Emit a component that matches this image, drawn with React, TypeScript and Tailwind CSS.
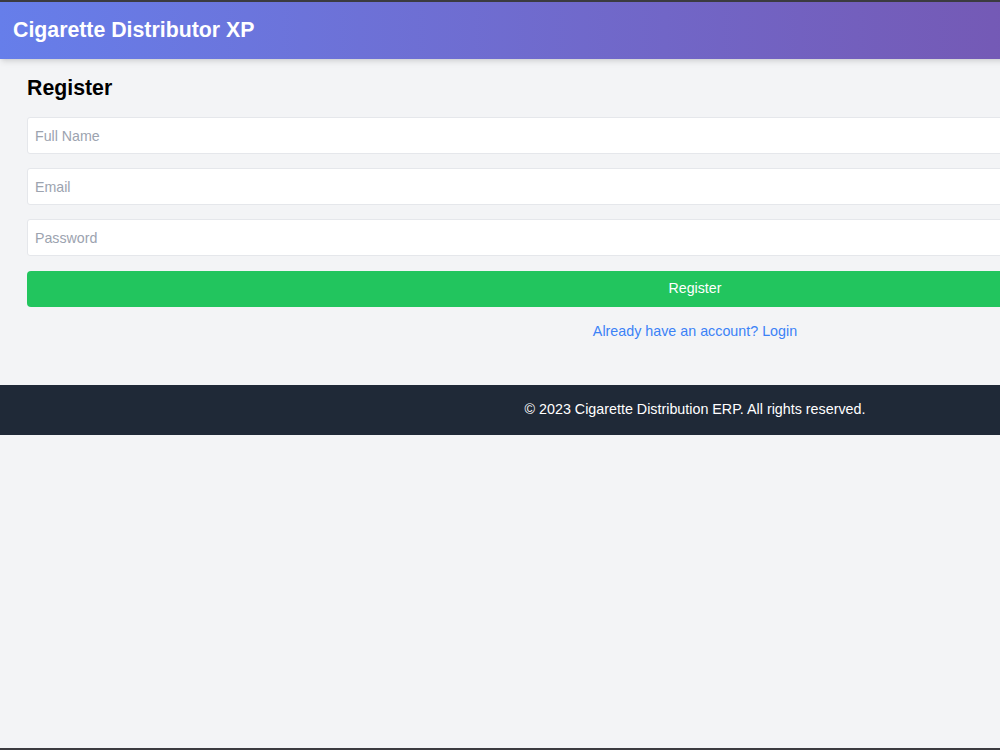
import React, { useState } from 'react';

const App = () => {
  const [form, setForm] = useState({ name: '', email: '', password: '' });

  const handleChange = (e: React.ChangeEvent<HTMLInputElement>) => {
    setForm({ ...form, [e.target.id]: e.target.value });
  };

  const inputClass =
    'w-full h-[37px] bg-white border border-[#e5e7eb] rounded-[3px] px-[7px] text-[14.2px] text-gray-800 placeholder-[#9ca3af] outline-none';

  return (
    <div
      className="h-screen w-screen overflow-hidden bg-[#f3f4f6] flex flex-col border-t-2 border-[#3b3b40]"
      style={{ fontFamily: '"Liberation Sans", Arial, sans-serif' }}
    >
      <div className="w-[1390px] flex-1 flex flex-col">
        {/* Header */}
        <header className="h-[57px] shrink-0 flex items-center px-[13px] bg-gradient-to-r from-[#667eea] to-[#764ba2] shadow-md relative z-10">
          <h1 className="text-[21.3px] font-bold text-white">Cigarette Distributor XP</h1>
        </header>

        {/* Register form */}
        <main className="px-[27px] pt-[15px] pb-[44px]">
          <h2 className="text-[21.3px] leading-[28px] font-bold text-black mb-[15px]">Register</h2>
          <form className="flex flex-col" onSubmit={(e) => e.preventDefault()}>
            <input
              id="name"
              type="text"
              value={form.name}
              onChange={handleChange}
              placeholder="Full Name"
              className={inputClass + ' mb-[14px]'}
            />
            <input
              id="email"
              type="email"
              value={form.email}
              onChange={handleChange}
              placeholder="Email"
              className={inputClass + ' mb-[14px]'}
            />
            <input
              id="password"
              type="password"
              value={form.password}
              onChange={handleChange}
              placeholder="Password"
              className={inputClass + ' mb-[15px]'}
            />
            <button
              type="submit"
              className="w-full h-[36px] bg-[#22c55e] text-white text-[14.2px] rounded-[4px]"
            >
              Register
            </button>
          </form>
          <p className="text-center mt-[14px] leading-[20px]">
            <a href="#" className="text-[14.3px] text-[#3b82f6]">
              Already have an account? Login
            </a>
          </p>
        </main>

        {/* Footer */}
        <footer className="h-[50px] shrink-0 bg-[#1f2937] flex items-center justify-center">
          <p className="text-[14.3px] text-white">© 2023 Cigarette Distribution ERP. All rights reserved.</p>
        </footer>
        <div className="flex-1" />
      </div>
      <div className="h-[2px] shrink-0 bg-[#3b3b40]" />
    </div>
  );
};

export default App;
